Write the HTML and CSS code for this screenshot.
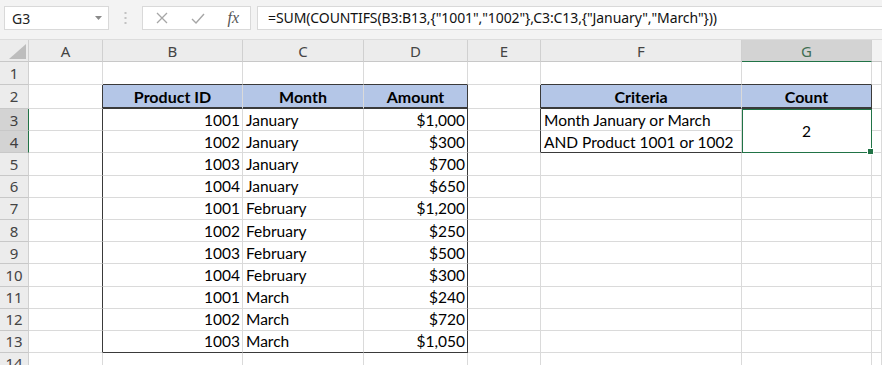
FILE: index.html
```html
<!DOCTYPE html>
<html lang="en">
<head>
    <meta charset="UTF-8">
    <title>COUNTIFS with OR criteria</title>
    <link rel="stylesheet" href="styles.css">
</head>
<body>

    <!-- barra de nome + formula -->
    <div class="toolbar">
        <div class="namebox">
            <span>G3</span>
            <svg width="7" height="4" viewBox="0 0 7 4"><path d="M0 0h7L3.5 4z" fill="#8a8a8a"/></svg>
        </div>
        <div class="grip">
            <svg width="3" height="12" viewBox="0 0 3 12">
                <rect x="0.5" y="0" width="2" height="2" fill="#c2c2c2"/>
                <rect x="0.5" y="5" width="2" height="2" fill="#c2c2c2"/>
                <rect x="0.5" y="10" width="2" height="2" fill="#c2c2c2"/>
            </svg>
        </div>
        <div class="fbtns">
            <svg width="12" height="12" viewBox="0 0 12 12"><path d="M1 1L11 11M11 1L1 11" stroke="#a6a6a6" stroke-width="1.3" fill="none"/></svg>
            <svg width="14" height="11" viewBox="0 0 14 11"><path d="M1 6L5 10L13 1" stroke="#a6a6a6" stroke-width="1.4" fill="none"/></svg>
            <span class="fx">fx</span>
        </div>
        <div class="formula">=SUM(COUNTIFS(B3:B13,{"1001","1002"},C3:C13,{"January","March"}))</div>
    </div>

    <!-- a folha -->
    <div class="sheet">
        <!-- cabecalho das colunas -->
        <div class="ch corner">
            <svg width="17" height="15" viewBox="0 0 17 15"><path d="M17 0V15H0z" fill="#bdbdbd"/></svg>
        </div>
        <div class="ch">A</div>
        <div class="ch">B</div>
        <div class="ch">C</div>
        <div class="ch">D</div>
        <div class="ch">E</div>
        <div class="ch">F</div>
        <div class="ch sel">G</div>
        <div class="ch last"></div>

        <!-- linha 1 -->
        <div class="rh">1</div>
        <div class="c"></div>
        <div class="c kb"></div>
        <div class="c kb"></div>
        <div class="c kb"></div>
        <div class="c"></div>
        <div class="c kb"></div>
        <div class="c kb"></div>
        <div class="c"></div>

        <!-- linha 2 -->
        <div class="rh">2</div>
        <div class="c kr"></div>
        <div class="c hd">Product ID</div>
        <div class="c hd">Month</div>
        <div class="c hd kr">Amount</div>
        <div class="c kr"></div>
        <div class="c hd">Criteria</div>
        <div class="c hd kr">Count</div>
        <div class="c"></div>

        <!-- linha 3 -->
        <div class="rh sel">3</div>
        <div class="c kr"></div>
        <div class="c num">1001</div>
        <div class="c">January</div>
        <div class="c num kr">$1,000</div>
        <div class="c kr"></div>
        <div class="c">Month January or March</div>
        <div class="c active">2<span class="handle"></span></div>
        <div class="c"></div>

        <!-- linha 4 -->
        <div class="rh sel">4</div>
        <div class="c kr"></div>
        <div class="c num">1002</div>
        <div class="c">January</div>
        <div class="c num kr">$300</div>
        <div class="c kr"></div>
        <div class="c kb">AND Product 1001 or 1002</div>
        <div class="c"></div>

        <!-- linha 5 -->
        <div class="rh">5</div>
        <div class="c kr"></div>
        <div class="c num">1003</div>
        <div class="c">January</div>
        <div class="c num kr">$700</div>
        <div class="c"></div>
        <div class="c"></div>
        <div class="c"></div>
        <div class="c"></div>

        <!-- linha 6 -->
        <div class="rh">6</div>
        <div class="c kr"></div>
        <div class="c num">1004</div>
        <div class="c">January</div>
        <div class="c num kr">$650</div>
        <div class="c"></div>
        <div class="c"></div>
        <div class="c"></div>
        <div class="c"></div>

        <!-- linha 7 -->
        <div class="rh">7</div>
        <div class="c kr"></div>
        <div class="c num">1001</div>
        <div class="c">February</div>
        <div class="c num kr">$1,200</div>
        <div class="c"></div>
        <div class="c"></div>
        <div class="c"></div>
        <div class="c"></div>

        <!-- linha 8 -->
        <div class="rh">8</div>
        <div class="c kr"></div>
        <div class="c num">1002</div>
        <div class="c">February</div>
        <div class="c num kr">$250</div>
        <div class="c"></div>
        <div class="c"></div>
        <div class="c"></div>
        <div class="c"></div>

        <!-- linha 9 -->
        <div class="rh">9</div>
        <div class="c kr"></div>
        <div class="c num">1003</div>
        <div class="c">February</div>
        <div class="c num kr">$500</div>
        <div class="c"></div>
        <div class="c"></div>
        <div class="c"></div>
        <div class="c"></div>

        <!-- linha 10 -->
        <div class="rh">10</div>
        <div class="c kr"></div>
        <div class="c num">1004</div>
        <div class="c">February</div>
        <div class="c num kr">$300</div>
        <div class="c"></div>
        <div class="c"></div>
        <div class="c"></div>
        <div class="c"></div>

        <!-- linha 11 -->
        <div class="rh">11</div>
        <div class="c kr"></div>
        <div class="c num">1001</div>
        <div class="c">March</div>
        <div class="c num kr">$240</div>
        <div class="c"></div>
        <div class="c"></div>
        <div class="c"></div>
        <div class="c"></div>

        <!-- linha 12 -->
        <div class="rh">12</div>
        <div class="c kr"></div>
        <div class="c num">1002</div>
        <div class="c">March</div>
        <div class="c num kr">$720</div>
        <div class="c"></div>
        <div class="c"></div>
        <div class="c"></div>
        <div class="c"></div>

        <!-- linha 13 -->
        <div class="rh">13</div>
        <div class="c kr"></div>
        <div class="c num kb">1003</div>
        <div class="c kb">March</div>
        <div class="c num kr kb">$1,050</div>
        <div class="c"></div>
        <div class="c"></div>
        <div class="c"></div>
        <div class="c"></div>

        <!-- linha 14, cortada em baixo -->
        <div class="rh">14</div>
        <div class="c"></div>
        <div class="c"></div>
        <div class="c"></div>
        <div class="c"></div>
        <div class="c"></div>
        <div class="c"></div>
        <div class="c"></div>
        <div class="c"></div>
    </div>

</body>
</html>
```

FILE: styles.css
```css
body {
    margin: 0;
    background-color: #fff;
    font-family: Lato, "Liberation Sans", sans-serif;
    overflow: hidden;
}

/* barra de cima */
.toolbar {
    display: flex;
    align-items: flex-start;
    height: 40px;
    padding: 6px 0 0 4px;
    box-sizing: border-box;
    background-color: #f3f3f3;
    border-bottom: 1px solid #dcdcdc;
}

.namebox {
    width: 105px;
    height: 24px;
    box-sizing: border-box;
    display: flex;
    align-items: center;
    justify-content: space-between;
    padding: 0 6px 0 7px;
    background-color: #fff;
    border: 1px solid #d9d9d9;
    font-family: "Noto Sans", sans-serif;
    font-size: 14px;
    color: #222;
}

.grip {
    width: 33px;
    height: 24px;
    display: flex;
    align-items: center;
    justify-content: center;
}

.fbtns {
    width: 109px;
    height: 24px;
    box-sizing: border-box;
    display: flex;
    align-items: center;
    justify-content: space-between;
    padding: 0 11px 0 13px;
    background-color: #fff;
    border: 1px solid #d9d9d9;
}

.fx {
    font-family: "Liberation Serif", serif;
    font-style: italic;
    font-size: 16px;
    color: #555;
}

.formula {
    flex: 1;
    height: 24px;
    margin-left: 6px;
    box-sizing: border-box;
    padding-left: 10px;
    line-height: 22px;
    background-color: #fff;
    border: 1px solid #d9d9d9;
    border-right: none;
    font-family: "Noto Sans", sans-serif;
    font-size: 14px;
    letter-spacing: -0.1px;
    color: #111;
    white-space: nowrap;
}

/* a grelha */
.sheet {
    display: grid;
    grid-template-columns: 29px 74px 140px 121px 104px 73px 201px 130px 1fr;
    grid-template-rows: 22px 22.5px 24.5px repeat(11, 22.2px) 1fr;
    height: 325px;
}

.ch, .rh {
    display: flex;
    align-items: center;
    justify-content: center;
    box-sizing: border-box;
    background-color: #ececec;
    border-right: 1px solid #d0d0d0;
    border-bottom: 1px solid #c8c8c8;
    font-family: "Noto Sans", sans-serif;
    font-size: 15px;
    color: #444;
}

.ch.corner {
    align-items: flex-end;
    justify-content: flex-end;
    padding: 0 2px 2px 0;
}

.ch.last {
    background-color: #f3f3f3;
    border-right: none;
}

.ch.sel {
    background-color: #d3d3d3;
    color: #3f6e52;
    border-bottom: 1px solid #217346;
}

.rh.sel {
    background-color: #d3d3d3;
    color: #3f3f3f;
    border-right: 1px solid #217346;
}

.c {
    display: flex;
    align-items: center;
    box-sizing: border-box;
    padding: 0 3px;
    border-right: 1px solid #dadada;
    border-bottom: 1px solid #dadada;
    font-size: 15.5px;
    color: #000;
    white-space: nowrap;
}

.c.num {
    justify-content: flex-end;
    padding-right: 2px;
}

.c.kb {
    border-bottom-color: #3a3a3a;
}

.c.kr {
    border-right-color: #3a3a3a;
}

.c.hd {
    justify-content: center;
    background-color: #b4c6e7;
    font-size: 16px;
    font-weight: bold;
    border-bottom-color: #3a3a3a;
    box-shadow: inset 0 -1px 0 #3a3a3a;
}

.c.active {
    grid-row: span 2;
    position: relative;
    justify-content: center;
    border-right: 1px solid #217346;
    border-bottom: 1px solid #217346;
    box-shadow: inset 1px 1px 0 #217346;
}

.handle {
    position: absolute;
    right: -3px;
    bottom: -3px;
    width: 5px;
    height: 5px;
    background-color: #217346;
    border: 1px solid #fff;
}
```
